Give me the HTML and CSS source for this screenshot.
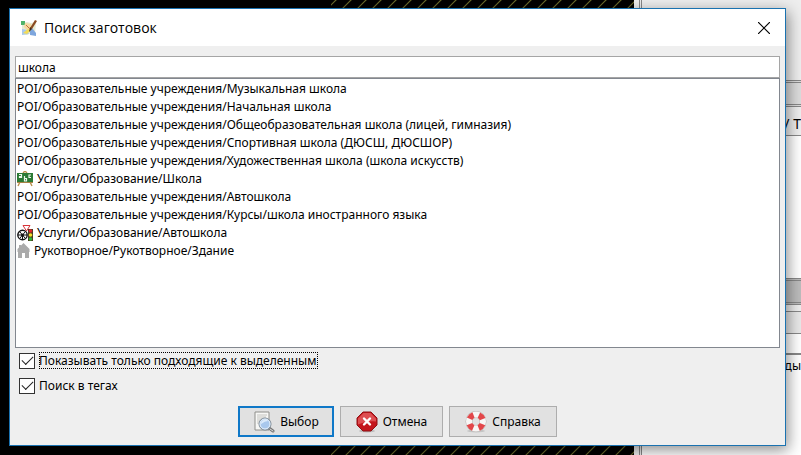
FILE: index.html
```html
<!DOCTYPE html>
<html lang="ru">
<head>
    <meta charset="UTF-8">
    <meta name="viewport" content="width=device-width, initial-scale=1.0">
    <title>Поиск заготовок</title>
    <link rel="stylesheet" href="styles.css">
</head>
<body>
    <div class="workspace">
        <div class="map">
            <svg class="hatch" aria-hidden="true">
                <defs>
                    <pattern id="hatch" width="15" height="15" patternUnits="userSpaceOnUse">
                        <path d="M-1 6L6 -1M4 16L16 4" stroke="#6b6b2c" stroke-width="1.2"/>
                    </pattern>
                </defs>
                <rect width="100%" height="100%" fill="url(#hatch)"/>
            </svg>
        </div>
        <div class="splitter"></div>
        <div class="sidebar">
            <div class="side-top"></div>
            <div class="side-title"></div>
            <div class="side-tabs">/ Т</div>
            <div class="side-list"></div>
            <div class="side-title dark"></div>
            <div class="side-header"></div>
            <div class="side-row"></div>
            <div class="side-body">ды</div>
        </div>
    </div>

    <form class="dialog" role="dialog" aria-labelledby="dialog-title">
        <header class="titlebar">
            <svg class="app-icon" viewBox="0 0 16 16" aria-hidden="true">
                <path d="M1 3l5-1 4 1 5-1-1 12-4-1-4 2-5-1z" fill="#e6ead2"/>
                <path d="M0 1h4v4H0z" fill="#4fb36a"/>
                <path d="M4 3l6 1 1 4-5 2-3-3z" fill="#f6d9a0"/>
                <path d="M1 9l5 1 2 4-7 1z" fill="#a9c9ee"/>
                <path d="M9 8l2 0 4 5v3l-6-1z" fill="#7ea6dd"/>
                <path d="M2 13l5-4 3 1-4 4z" fill="#f3dc57"/>
                <path d="M14 0l2 1-5 8-2-1z" fill="#8a4a22"/>
                <path d="M9 7l2 2-3 3z" fill="#3d2a1c"/>
                <path d="M5 5l4 4" stroke="#c2703a"/>
            </svg>
            <h1 class="title" id="dialog-title">Поиск заготовок</h1>
            <button type="button" class="close-btn" aria-label="Закрыть">
                <svg width="12" height="12" viewBox="0 0 12 12"><path d="M0 0l12 12M12 0L0 12" stroke="#000" stroke-width="1.2"/></svg>
            </button>
        </header>

        <div class="content">
            <input type="text" class="search" value="школа" aria-label="Поиск">
            <ul class="results" role="listbox" aria-label="Заготовки">
                <li role="option">POI/Образовательные учреждения/Музыкальная школа</li>
                <li role="option">POI/Образовательные учреждения/Начальная школа</li>
                <li role="option">POI/Образовательные учреждения/Общеобразовательная школа (лицей, гимназия)</li>
                <li role="option">POI/Образовательные учреждения/Спортивная школа (ДЮСШ, ДЮСШОР)</li>
                <li role="option">POI/Образовательные учреждения/Художественная школа (школа искусств)</li>
                <li role="option">
                    <svg width="16" height="16" viewBox="0 0 16 16" aria-hidden="true">
                        <path d="M6 2l2-2 2 2M3 11l-2 4M13 11l2 4" stroke="#b98d4a" stroke-width="1.4" fill="none"/>
                        <path d="M0 2h16v9H0z" fill="#2b7a35"/>
                        <path d="M0 11h16v1H0z" fill="#a98245"/>
                        <path d="M2 3.500h2.500V7M4.500 5.500h-2V6.500H4M7.500 5v5h2V7.500h-2M14 4h-2v2.500h2" stroke="#eef7ec" stroke-width="1.200" fill="none"/>
                    </svg>
                    Услуги/Образование/Школа
                </li>
                <li role="option">POI/Образовательные учреждения/Автошкола</li>
                <li role="option">POI/Образовательные учреждения/Курсы/школа иностранного языка</li>
                <li role="option">
                    <svg width="16" height="16" viewBox="0 0 16 16" aria-hidden="true">
                        <path d="M6 .5h7L9.500 6z" fill="#fff" stroke="#d8343a"/>
                        <circle cx="5.500" cy="10" r="4.700" fill="#fff" stroke="#111" stroke-width="1.400"/>
                        <path d="M1 10h9M5.500 10V15M3 7l5 6M8 7l-5 6" stroke="#111"/>
                        <circle cx="5.500" cy="10" r="1.500" fill="#111"/>
                        <path d="M11 4h5v12h-5z" fill="#4b3b20"/>
                        <circle cx="13.500" cy="6" r="1.800" fill="#e3252b"/>
                        <circle cx="13.500" cy="10" r="1.800" fill="#f5dc2b"/>
                        <circle cx="13.500" cy="14" r="1.800" fill="#2fb53a"/>
                    </svg>
                    Услуги/Образование/Автошкола
                </li>
                <li role="option">
                    <svg width="13" height="16" viewBox="0 0 13 16" aria-hidden="true">
                        <path d="M6.500 0L12.500 6v3H12v6H8v-5H5v5H1V9H.5V6L2 4.500V2h2v.5z" fill="#aaa"/>
                    </svg>
                    Рукотворное/Рукотворное/Здание
                </li>
            </ul>

            <div class="options">
                <label class="option"><input type="checkbox" checked><span class="focused">Показывать только подходящие к выделенным</span></label>
                <label class="option"><input type="checkbox" checked><span>Поиск в тегах</span></label>
            </div>

            <div class="buttons">
                <button type="submit" class="btn primary">
                    <svg width="22" height="22" viewBox="0 0 22 22" aria-hidden="true">
                        <path d="M2 1h14v18H2z" fill="#f7f7f5" stroke="#8e8e8a"/>
                        <path d="M4 4h10M4 6h9M4 8h5M4 10h3M4 12h2" stroke="#c4c4c0"/>
                        <path d="M16 17l4 3" stroke="#777" stroke-width="3" stroke-linecap="round"/>
                        <path d="M17 18l3 2" stroke="#ddd" stroke-linecap="round"/>
                        <circle cx="12" cy="13" r="6" fill="#a9c8ed" stroke="#7b8792"/>
                        <circle cx="12" cy="13" r="5" fill="none" stroke="#e8f1fa"/>
                        <path d="M8 13a4 4 0 0 1 7-3q-3 0-7 3z" fill="#dcebfb"/>
                    </svg>
                    Выбор
                </button>
                <button type="button" class="btn">
                    <svg width="22" height="22" viewBox="0 0 22 22" aria-hidden="true">
                        <ellipse cx="11" cy="20" rx="8" ry="1.500" fill="#bbb"/>
                        <path d="M7 1h8l6 6v7l-6 6H7l-6-6V7z" fill="#c4161c" stroke="#8f1115"/>
                        <path d="M7.500 2h7L20 7.500v3q-9-1-18 3v-6z" fill="#dd4f52"/>
                        <path d="M8 7.500l6 6M14 7.500l-6 6" stroke="#fff" stroke-width="2.400" stroke-linecap="round"/>
                    </svg>
                    Отмена
                </button>
                <button type="button" class="btn">
                    <svg width="22" height="22" viewBox="0 0 22 22" aria-hidden="true">
                        <ellipse cx="11" cy="20" rx="9" ry="1.500" fill="#c4c4c4"/>
                        <circle cx="11" cy="10.500" r="7" fill="none" stroke="#b9b4b2" stroke-width="7"/>
                        <circle cx="11" cy="10.500" r="7" fill="none" stroke="#f8f6f5" stroke-width="6"/>
                        <circle cx="11" cy="10.500" r="7" fill="none" stroke="#e2474a" stroke-width="6" stroke-dasharray="5.500 5.500" stroke-dashoffset="-2.750"/>
                    </svg>
                    Справка
                </button>
            </div>
        </div>
    </form>
</body>
</html>
```
FILE: styles.css
```css
* {
    margin: 0;
    padding: 0;
    box-sizing: border-box;
}

body {
    font-family: Tahoma, "Noto Sans", sans-serif;
    font-size: 12px;
    line-height: 18px;
    color: #000;
    overflow: hidden;
}

button,
input {
    font: inherit;
    color: inherit;
}

/* main window behind the dialog */
.workspace {
    display: flex;
    height: 100vh;
    background: #000;
}

.map {
    flex: 1;
    display: flex;
    padding-left: 331px;
}

.hatch {
    width: 100%;
    height: 100%;
}

.splitter {
    width: 8px;
    background: #eee;
    border-right: 3px double #888;
}

.sidebar {
    width: 159px;
    display: flex;
    flex-direction: column;
    background: #eee;
}

.side-top {
    height: 80px;
}

.side-title {
    height: 27px;
    background: #dcdcdc;
    border-top: 3px double #888;
    border-bottom: 3px double #888;
}

.side-title.dark {
    background: #bcbcbc;
}

.side-tabs {
    height: 29px;
    padding-top: 8px;
    border-bottom: 1px solid #888;
    font-size: 14px;
    text-align: right;
}

.side-list {
    height: 142px;
    background: #fff;
}

.side-header {
    height: 23px;
    margin-top: 6px;
    background: #e8e8e8;
    border-top: 1px solid #888;
    border-bottom: 1px solid #888;
}

.side-row {
    height: 21px;
    background: #fff;
    border-bottom: 2px solid #888;
}

.side-body {
    flex: 1;
    padding-top: 2px;
    background: #fff;
    text-align: right;
}

/* dialog */
.dialog {
    position: absolute;
    top: 8px;
    left: 9px;
    right: 15px;
    background: #efefef;
    border: 1px solid #1a72b0;
    box-shadow: 2px 4px 14px rgba(0, 0, 0, 0.45);
}

.titlebar {
    display: flex;
    align-items: center;
    height: 37px;
    padding: 0 15px 0 11px;
    background: #fff;
}

.app-icon {
    width: 16px;
    height: 16px;
}

.title {
    flex: 1;
    margin-left: 7px;
    font-family: "Segoe UI", "Open Sans", sans-serif;
    font-size: 14px;
    font-weight: 400;
}

.close-btn {
    display: flex;
    border: none;
    background: none;
}

.content {
    padding: 10px 5px 8px;
}

.search {
    display: block;
    width: 100%;
    height: 22px;
    padding: 0 2px;
    background: #fff;
    border: 1px solid #a5a5a5;
    outline: none;
}

.results {
    height: 270px;
    padding: 1px;
    background: #fff;
    border: 1px solid #82878f;
    list-style: none;
}

.results li {
    display: flex;
    align-items: center;
    gap: 4px;
    height: 18px;
    white-space: nowrap;
}

.options {
    display: flex;
    flex-direction: column;
    align-items: flex-start;
    gap: 8px;
    padding: 4px 4px 0;
}

.option {
    display: flex;
    align-items: center;
    gap: 4px;
    height: 17px;
    line-height: 15px;
}

.option input {
    appearance: none;
    display: grid;
    place-items: center;
    width: 16px;
    height: 16px;
    background: #fff;
    border: 1px solid #333;
}

.option input:checked::before {
    content: "";
    width: 10px;
    height: 5px;
    margin-bottom: 3px;
    border-left: 1px solid #222;
    border-bottom: 1px solid #222;
    transform: rotate(-45deg);
}

.option span {
    border: 1px solid transparent;
    border-width: 1px 0;
}

.option .focused {
    padding-right: 2px;
    outline: 1px dotted #000;
    outline-offset: -1px;
}

.buttons {
    display: flex;
    justify-content: center;
    gap: 6px;
    margin-top: 12px;
}

.btn {
    display: flex;
    align-items: center;
    gap: 5px;
    height: 31px;
    padding: 0 15px;
    background: #e1e1e1;
    border: 1px solid #adadad;
}

.btn.primary {
    padding: 0 13px;
    border: 2px solid #0f78c8;
}
```
